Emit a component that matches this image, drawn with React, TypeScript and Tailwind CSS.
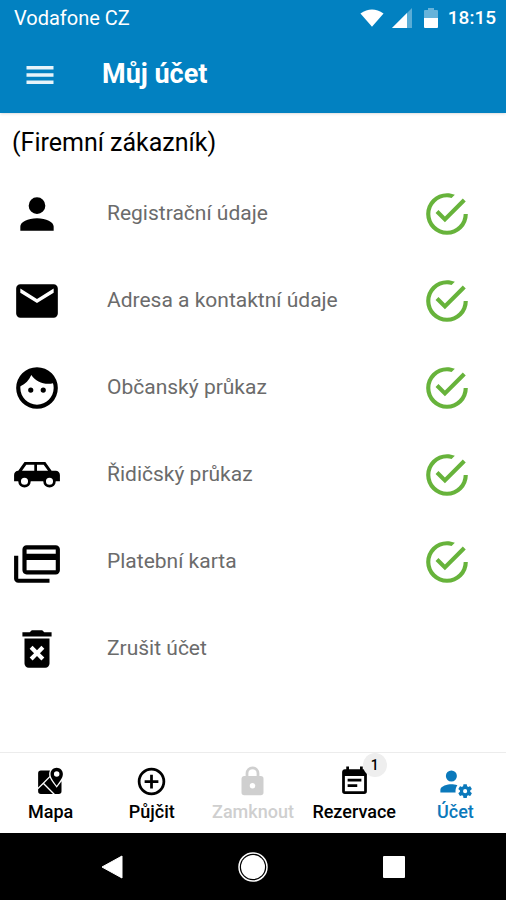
import React, { useState } from 'react'

const ICONS = {
	menu: 'M3,6H21V8.4H3V6M3,10.8H21V13.2H3V10.8M3,15.6H21V18H3V15.6Z',
	account:
		'M12,4A4,4 0 0,1 16,8A4,4 0 0,1 12,12A4,4 0 0,1 8,8A4,4 0 0,1 12,4M12,14C16.42,14 20,15.79 20,18V20H4V18C4,15.79 7.58,14 12,14Z',
	email: 'M20,8L12,13L4,8V6L12,11L20,6M20,4H4C2.89,4 2,4.89 2,6V18A2,2 0 0,0 4,20H20A2,2 0 0,0 22,18V6C22,4.89 21.1,4 20,4Z',
	face: 'M9,11.75A1.25,1.25 0 0,0 7.75,13A1.25,1.25 0 0,0 9,14.25A1.25,1.25 0 0,0 10.25,13A1.25,1.25 0 0,0 9,11.75M15,11.75A1.25,1.25 0 0,0 13.75,13A1.25,1.25 0 0,0 15,14.25A1.25,1.25 0 0,0 16.25,13A1.25,1.25 0 0,0 15,11.75M12,2A10,10 0 0,0 2,12A10,10 0 0,0 12,22A10,10 0 0,0 22,12A10,10 0 0,0 12,2M12,20C7.59,20 4,16.41 4,12C4,11.71 4,11.42 4.05,11.14C6.41,10.09 8.28,8.16 9.26,5.77C11.07,8.33 14.05,10 17.42,10C18.2,10 18.95,9.91 19.67,9.74C19.88,10.45 20,11.21 20,12C20,16.41 16.41,20 12,20Z',
	car: 'M16,5.7L19,10H21C22.11,10 23,10.89 23,12V15H21A3,3 0 0,1 18,18A3,3 0 0,1 15,15H9A3,3 0 0,1 6,18A3,3 0 0,1 3,15H1V12C1,10.89 1.89,10 3,10L6,5.7H16M10.7,7.1H6.85L4.8,10H10.7V7.1M12,7.1V10H17.3L15.2,7.1H12M6,13.3A1.7,1.7 0 0,0 4.3,15A1.7,1.7 0 0,0 6,16.7A1.7,1.7 0 0,0 7.7,15A1.7,1.7 0 0,0 6,13.3M18,13.3A1.7,1.7 0 0,0 16.3,15A1.7,1.7 0 0,0 18,16.7A1.7,1.7 0 0,0 19.7,15A1.7,1.7 0 0,0 18,13.3Z',
	cards: 'M21,8V6H7V8H21M21,16V11H7V16H21M21,4A2,2 0 0,1 23,6V16A2,2 0 0,1 21,18H7C5.89,18 5,17.1 5,16V6C5,4.89 5.89,4 7,4H21M3,20H18V22H3A2,2 0 0,1 1,20V9H3V20Z',
	remove: 'M6,19A2,2 0 0,0 8,21H16A2,2 0 0,0 18,19V7H6V19M8.46,11.88L9.87,10.47L12,12.59L14.12,10.47L15.53,11.88L13.41,14L15.53,16.12L14.12,17.53L12,15.41L9.88,17.53L8.47,16.12L10.59,14L8.46,11.88M15.5,4L14.5,3H9.5L8.5,4H5V6H19V4H15.5Z',
	check: 'M20,12A8,8 0 0,1 12,20A8,8 0 0,1 4,12A8,8 0 0,1 12,4C12.76,4 13.5,4.11 14.2,4.31L15.77,2.74C14.61,2.26 13.34,2 12,2A10,10 0 0,0 2,12A10,10 0 0,0 12,22A10,10 0 0,0 22,12M7.91,10.08L6.5,11.5L11,16L21,6L19.59,4.58L11,13.17L7.91,10.08Z',
	map: 'M5,4A2,2 0 0,0 3,6V16.29L11.18,8.11C11.06,7.59 11,7.07 11,6.53C11,5.62 11.2,4.76 11.59,4H5M18,21A2,2 0 0,0 20,19V11.86C19.24,13 18.31,14.21 17.29,15.5L16.5,16.5L15.72,15.5C14.39,13.85 13.22,12.32 12.39,10.91C12.05,10.33 11.76,9.76 11.53,9.18L7.46,13.25L15.21,21H18M3,19A2,2 0 0,0 5,21H13.79L6.75,13.96L3,17.71V19M16.5,15C19.11,11.63 21,9.1 21,6.57C21,4.05 19,2 16.5,2C14,2 12,4.05 12,6.57C12,9.1 13.87,11.63 16.5,15M18.5,6.5A2,2 0 0,1 16.5,8.5A2,2 0 0,1 14.5,6.5A2,2 0 0,1 16.5,4.5A2,2 0 0,1 18.5,6.5Z',
	plus: 'M12,20C7.59,20 4,16.41 4,12C4,7.59 7.59,4 12,4C16.41,4 20,7.59 20,12C20,16.41 16.41,20 12,20M12,2A10,10 0 0,0 2,12A10,10 0 0,0 12,22A10,10 0 0,0 22,12A10,10 0 0,0 12,2M13,7H11V11H7V13H11V17H13V13H17V11H13V7Z',
	lock: 'M12,17A2,2 0 0,0 14,15C14,13.89 13.1,13 12,13A2,2 0 0,0 10,15A2,2 0 0,0 12,17M18,8A2,2 0 0,1 20,10V20A2,2 0 0,1 18,22H6A2,2 0 0,1 4,20V10C4,8.89 4.9,8 6,8H7V6A5,5 0 0,1 12,1A5,5 0 0,1 17,6V8H18M12,3A3,3 0 0,0 9,6V8H15V6A3,3 0 0,0 12,3Z',
	calendar:
		'M14,14H7V16H14M19,19H5V8H19M19,3H18V1H16V3H8V1H6V3H5C3.89,3 3,3.9 3,5V19A2,2 0 0,0 5,21H19A2,2 0 0,0 21,19V5A2,2 0 0,0 19,3M17,10H7V12H17V10Z',
	accountCog:
		'M9,4A4,4 0 0,0 5,8A4,4 0 0,0 9,12A4,4 0 0,0 13,8A4,4 0 0,0 9,4M9,14C6.33,14 1,15.33 1,18V20H12.08C12.03,19.67 12,19.34 12,19C12,17.5 12.5,16 13.41,14.8C11.88,14.28 10.18,14 9,14M18,14C17.87,14 17.76,14.09 17.74,14.21L17.55,15.53C17.25,15.66 16.96,15.82 16.7,16L15.46,15.5C15.35,15.5 15.22,15.5 15.15,15.63L14.15,17.36C14.09,17.47 14.11,17.6 14.21,17.68L15.27,18.5C15.25,18.67 15.24,18.83 15.24,19C15.24,19.17 15.25,19.33 15.27,19.5L14.21,20.32C14.12,20.4 14.09,20.53 14.15,20.64L15.15,22.37C15.21,22.5 15.34,22.5 15.46,22.5L16.7,22C16.96,22.18 17.24,22.35 17.55,22.47L17.74,23.79C17.76,23.91 17.86,24 18,24H20C20.11,24 20.22,23.91 20.24,23.79L20.43,22.47C20.73,22.34 21,22.18 21.27,22L22.5,22.5C22.63,22.5 22.76,22.5 22.83,22.37L23.83,20.64C23.89,20.53 23.86,20.4 23.77,20.32L22.7,19.5C22.72,19.33 22.74,19.17 22.74,19C22.74,18.83 22.73,18.67 22.7,18.5L23.76,17.68C23.85,17.6 23.88,17.47 23.82,17.36L22.82,15.63C22.76,15.5 22.63,15.5 22.5,15.5L21.27,16C21,15.82 20.73,15.65 20.42,15.53L20.23,14.21C20.22,14.09 20.11,14 20,14H18M19,17.5A1.5,1.5 0 0,1 20.5,19A1.5,1.5 0 0,1 19,20.5A1.5,1.5 0 0,1 17.5,19A1.5,1.5 0 0,1 19,17.5Z',
}

type IconName = keyof typeof ICONS

const Icon: React.FunctionComponent<{ name: IconName; className: string }> = ({
	name,
	className,
}) => (
	<svg viewBox="0 0 24 24" fill="currentColor" className={className} aria-hidden="true">
		<path d={ICONS[name]} />
	</svg>
)

const sections: { label: string; icon: IconName; done: boolean }[] = [
	{ label: 'Registrační údaje', icon: 'account', done: true },
	{ label: 'Adresa a kontaktní údaje', icon: 'email', done: true },
	{ label: 'Občanský průkaz', icon: 'face', done: true },
	{ label: 'Řidičský průkaz', icon: 'car', done: true },
	{ label: 'Platební karta', icon: 'cards', done: true },
	{ label: 'Zrušit účet', icon: 'remove', done: false },
]

const tabs: { label: string; icon: IconName; badge?: number; disabled?: boolean }[] = [
	{ label: 'Mapa', icon: 'map' },
	{ label: 'Půjčit', icon: 'plus' },
	{ label: 'Zamknout', icon: 'lock', disabled: true },
	{ label: 'Rezervace', icon: 'calendar', badge: 1 },
	{ label: 'Účet', icon: 'accountCog' },
]

const StatusBar = () => (
	<div className="flex h-9 items-center pl-3.5 pr-2.5">
		<span className="flex-1 text-xl">Vodafone CZ</span>
		<svg viewBox="0 0 26 20" className="mr-2 h-5 w-6" aria-hidden="true">
			<path d="M0.500 5Q13 -3.500 25.500 5L13 19.500Z" fill="currentColor" />
		</svg>
		<svg viewBox="0 0 20 20" className="mr-3 h-5 w-5" aria-hidden="true">
			<path d="M20 0V20H0Z" fill="currentColor" opacity="0.35" />
			<path d="M15 5V20H0Z" fill="currentColor" />
		</svg>
		<svg viewBox="0 0 14 20" className="mr-2.5 h-5 w-3.5" aria-hidden="true">
			<path d="M0 3Q0 2 1 2H4V0H10V2H13Q14 2 14 3V10H0Z" fill="currentColor" opacity="0.4" />
			<path d="M0 10H14V19Q14 20 13 20H1Q0 20 0 19Z" fill="currentColor" />
		</svg>
		<span className="text-[19px] font-medium">18:15</span>
	</div>
)

const SystemNav = () => (
	<div className="flex h-[67px] items-center justify-center gap-28 bg-black text-white">
		<button type="button" aria-label="Zpět">
			<svg viewBox="0 0 28 28" className="h-7 w-7" aria-hidden="true">
				<path d="M24 3V25L4 14Z" fill="currentColor" stroke="currentColor" strokeLinejoin="round" />
			</svg>
		</button>
		<button type="button" aria-label="Domů">
			<svg viewBox="0 0 30 30" className="h-[30px] w-[30px]" aria-hidden="true">
				<circle cx="15" cy="15" r="14" fill="none" stroke="currentColor" strokeWidth="1.500" />
				<circle cx="15" cy="15" r="12" fill="currentColor" />
			</svg>
		</button>
		<button type="button" aria-label="Přehled">
			<svg viewBox="0 0 28 28" className="h-7 w-7" aria-hidden="true">
				<rect x="3" y="3" width="22" height="22" rx="1" fill="currentColor" />
			</svg>
		</button>
	</div>
)

const App = () => {
	const [activeTab, setActiveTab] = useState('Účet')

	return (
		<div className="flex min-h-screen flex-col bg-white font-[Roboto,sans-serif] text-black">
			<header className="bg-[#0281c1] text-white shadow">
				<StatusBar />
				<div className="flex h-[77px] items-center gap-11 px-[22px]">
					<button type="button" aria-label="Menu">
						<Icon name="menu" className="h-9 w-9 text-[#e6f3fa]" />
					</button>
					<h1 className="text-[27px] font-bold">Můj účet</h1>
				</div>
			</header>

			<main className="flex-1 px-3 pt-3">
				<h2 className="pb-[9px] text-[25px] leading-9">(Firemní zákazník)</h2>
				<ul>
					{sections.map(section => (
						<li key={section.label}>
							<button
								type="button"
								className="flex h-[87px] w-full cursor-pointer items-center pr-[22px] text-left"
							>
								<Icon name={section.icon} className="h-[50px] w-[50px]" />
								<span className="flex-1 pl-[45px] text-[21px] text-[#6b6b6b]">{section.label}</span>
								{section.done && <Icon name="check" className="h-[50px] w-[50px] text-[#67b33b]" />}
							</button>
						</li>
					))}
				</ul>
			</main>

			<nav className="grid h-[81px] grid-cols-5 border-t border-[#ececec]">
				{tabs.map(tab => (
					<button
						key={tab.label}
						type="button"
						disabled={tab.disabled}
						onClick={() => setActiveTab(tab.label)}
						className={`flex flex-col items-center pt-3 text-lg font-medium leading-7 ${
							tab.disabled
								? 'text-[#cfcfcf]'
								: tab.label === activeTab
								? 'text-[#0b79bb]'
								: 'text-black'
						}`}
					>
						<span className="relative">
							<Icon name={tab.icon} className="h-[33px] w-[33px]" />
							{tab.badge && (
								<span className="absolute -right-4 -top-3 flex h-6 w-6 items-center justify-center rounded-full bg-[#eeeeee] text-sm">
									{tab.badge}
								</span>
							)}
						</span>
						<span>{tab.label}</span>
					</button>
				))}
			</nav>
			<SystemNav />
		</div>
	)
}

export default App
